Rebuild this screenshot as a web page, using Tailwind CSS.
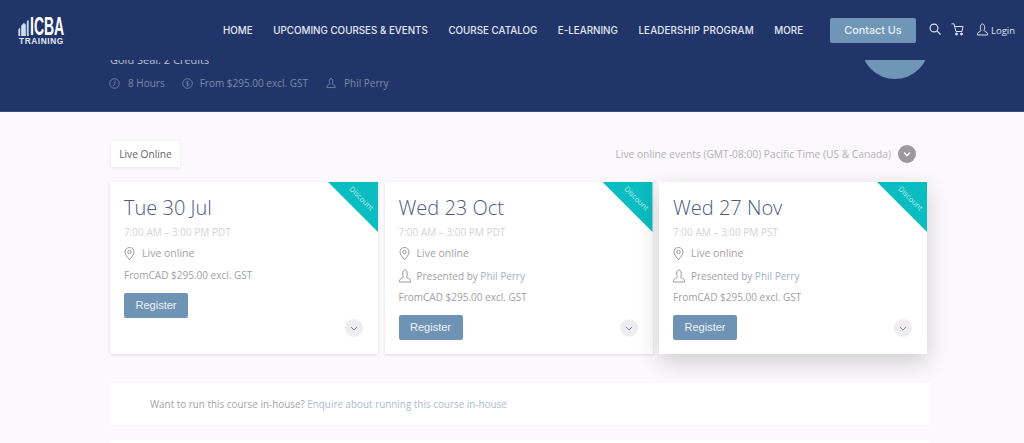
<!DOCTYPE html>
<html lang="en">
<head>
  <meta charset="UTF-8">
  <title>ICBA Training</title>
  <script src="https://cdn.jsdelivr.net/npm/@tailwindcss/browser@4"></script>
</head>
<body class="bg-[#fbf9fc] font-['Open_Sans',sans-serif] h-[443px] overflow-hidden">

  <section class="relative h-[112px] bg-[#21356a] border-b border-[#3a4c7d] overflow-hidden">
    <div class="pl-[109px] pt-[50px]">
      <p class="pl-[1px] text-[11px] leading-[20px] text-[#b9c0d2]">Gold Seal: 2 Credits</p>
      <div class="flex items-center mt-[5px] text-[10px] leading-[16px] text-[#7f8aa8]">
        <svg class="w-[11px] h-[11px] mr-[8px]" viewBox="0 0 12 12" fill="none" stroke="currentColor" stroke-width=".9"><circle cx="6" cy="6" r="5.2"/><path d="M6.500 2.800V6.200L4.600 8.600"/></svg>
        <span class="mr-[17px]">8 Hours</span>
        <svg class="w-[11px] h-[11px] mr-[7px]" viewBox="0 0 12 12" fill="none" stroke="currentColor" stroke-width=".9"><circle cx="6" cy="6" r="5.2"/><path d="M7.600 4.500C7 3.500 4.500 3.600 4.500 4.900 4.500 6.300 7.600 5.700 7.600 7.200 7.600 8.500 5 8.500 4.400 7.400M6 2.900v6.200" stroke-width=".7"/></svg>
        <span class="mr-[18px]">From $295.00 excl. GST</span>
        <svg class="w-[10px] h-[12px] mr-[8px]" viewBox="0 0 12 13" fill="none" stroke="currentColor"><path d="M4.500 7.500C3.500 6 3.500 1 6 1s2.500 5 1.500 6.500c0 1 3.500 1.500 3.500 3V12H1v-1.500c0-1.500 3.500-2 3.500-3Z"/></svg>
        <span>Phil Perry</span>
      </div>
    </div>
    <div class="absolute left-[861px] top-[11px] w-[68px] h-[68px] rounded-full bg-[#6f96b7]"></div>

    <header class="absolute inset-x-0 top-0 h-[60px] bg-[#21356a] flex items-start">
      <div class="ml-[18px] mt-[16px] w-[47px] flex flex-col text-white">
        <div class="flex items-end h-[20px]">
          <svg class="w-[11px] h-[16px] mr-[1px]" viewBox="0 0 11 17"><path d="M0 17V10L2 8V17ZM3 17V6L6 3L8 5V17ZM9 17V1L11 0V17Z" fill="#c9dcec"/></svg>
          <span class="font-['Liberation_Sans',sans-serif] font-bold text-[25px] leading-[20px] scale-x-[.56] origin-left w-[35px] whitespace-nowrap">ICBA</span>
        </div>
        <span class="ml-[1px] font-['Liberation_Sans',sans-serif] font-bold text-[8.300px] leading-[8px] mt-[1px] tracking-[.6px] text-[#e4ebf3]">TRAINING</span>
      </div>
      <nav class="absolute left-[223px] top-[24px] flex gap-[20.600px] font-['Inter',sans-serif] font-medium text-[9.800px] leading-[14px] text-[#e6e9f1] whitespace-nowrap">
        <a>HOME</a>
        <a>UPCOMING COURSES &amp; EVENTS</a>
        <a>COURSE CATALOG</a>
        <a>E-LEARNING</a>
        <a class="tracking-[.15px]">LEADERSHIP PROGRAM</a>
        <a>MORE</a>
      </nav>
      <a class="absolute left-[830px] top-[18px] w-[86px] h-[25px] pt-[1px] rounded-[2px] bg-[#6f96b7] flex items-center justify-center font-['Inter',sans-serif] font-medium text-[10.800px] text-[#eaf0f5]">Contact Us</a>
      <svg class="absolute left-[929px] top-[23px] w-[12px] h-[12px] text-[#dfe4ee]" viewBox="0 0 12 12" fill="none" stroke="currentColor" stroke-width="1.100"><circle cx="5" cy="5" r="3.900"/><path d="M8 8l3.500 3.500"/></svg>
      <svg class="absolute left-[951px] top-[23px] w-[13px] h-[13px] text-[#dfe4ee]" viewBox="0 0 13 13" fill="none" stroke="currentColor"><path d="M.5 .8H3L5 8.500H11L12 3.500H3.800"/><circle cx="5.500" cy="11" r="1" fill="currentColor"/><circle cx="10.500" cy="11" r="1" fill="currentColor"/></svg>
      <svg class="absolute left-[977px] top-[23px] w-[11px] h-[13px] text-[#dfe4ee]" viewBox="0 0 11 13" fill="none" stroke="currentColor"><path d="M4 7.500C3 6 3 1 5.500 1S8 6 7 7.500c0 1 3.500 1.500 3.500 3V12H.5v-1.500c0-1.500 3.500-2 3.500-3Z"/></svg>
      <a class="absolute left-[991px] top-[24px] text-[9.500px] leading-[14px] text-[#dfe4ee]">Login</a>
    </header>
  </section>

  <main class="w-[817px] ml-[110px]">
    <div class="flex items-center justify-between h-[26px] mt-[29px]">
      <div class="h-[26px] w-[69px] ml-[1px] pt-[1px] bg-white shadow-[0_1px_3px_rgba(0,0,0,.08)] flex items-center justify-center text-[10.200px] text-[#666]">Live Online</div>
      <div class="flex items-center mr-[11px] text-[10.250px] text-[#b4b3b4]">
        <span class="pt-[1px]">Live online events (GMT-08:00) Pacific Time (US &amp; Canada)</span>
        <span class="ml-[7px] w-[18px] h-[18px] rounded-full bg-[#9b999c] flex items-center justify-center">
          <svg class="w-[8px] h-[6px]" viewBox="0 0 8 6" fill="none" stroke="#fff" stroke-width="1.500"><path d="M1 1.500l3 3 3-3"/></svg>
        </span>
      </div>
    </div>

    <div class="grid grid-cols-3 gap-[6.500px] mt-[15px]">
      <article class="relative h-[172px] bg-white shadow-[0_1px_3px_rgba(0,0,0,.12)] overflow-hidden px-[14px] pt-[13px]">
        <div class="absolute right-0 top-0 w-[50px] h-[50px] bg-[#0bbcc0] [clip-path:polygon(0_0,100%_0,100%_100%)]"></div>
        <span class="absolute right-[1px] top-[11px] rotate-45 text-[7.500px] text-[#bdeef0]">Discount</span>
        <h2 class="font-light text-[20px] leading-[26px] text-[#4b5a82]">Tue 30 Jul</h2>
        <p class="mt-[3px] text-[10px] leading-[16px] text-[#d4d3d5]">7:00 AM – 3:00 PM PDT</p>
        <div class="flex items-center mt-[6px] h-[16px] text-[10.500px] text-[#a3a2a4]">
          <svg class="w-[11px] h-[14px] mr-[7px]" viewBox="0 0 11 14" fill="none" stroke="#8f8e90" stroke-width=".9"><path d="M5.500 13C4 10.500 1 8 1 5a4.500 4.500 0 0 1 9 0c0 3-3 5.500-4.500 8Z"/><circle cx="5.500" cy="5" r="1.700"/></svg>
          Live online
        </div>
        <p class="mt-[5px] text-[10px] leading-[16px] text-[#a2a1a3]">FromCAD $295.00 excl. GST</p>
        <a class="block mt-[10px] w-[64px] h-[25px] rounded-[2px] bg-[#6f93b5] font-['Liberation_Sans',sans-serif] text-[11px] leading-[25px] text-center text-[#eef3f7]">Register</a>
        <span class="absolute right-[15px] bottom-[17px] w-[18px] h-[18px] rounded-full bg-[#efedf0] flex items-center justify-center">
          <svg class="w-[8px] h-[5px]" viewBox="0 0 8 5" fill="none" stroke="#7c94b5"><path d="M.8 .8L4 4 7.200 .8"/></svg>
        </span>
      </article>

      <article class="relative h-[172px] bg-white shadow-[0_1px_3px_rgba(0,0,0,.12)] overflow-hidden px-[14px] pt-[13px]">
        <div class="absolute right-0 top-0 w-[50px] h-[50px] bg-[#0bbcc0] [clip-path:polygon(0_0,100%_0,100%_100%)]"></div>
        <span class="absolute right-[1px] top-[11px] rotate-45 text-[7.500px] text-[#bdeef0]">Discount</span>
        <h2 class="font-light text-[20px] leading-[26px] text-[#4b5a82]">Wed 23 Oct</h2>
        <p class="mt-[3px] text-[10px] leading-[16px] text-[#d4d3d5]">7:00 AM – 3:00 PM PDT</p>
        <div class="flex items-center mt-[6px] h-[16px] text-[10.500px] text-[#a3a2a4]">
          <svg class="w-[11px] h-[14px] mr-[7px]" viewBox="0 0 11 14" fill="none" stroke="#8f8e90" stroke-width=".9"><path d="M5.500 13C4 10.500 1 8 1 5a4.500 4.500 0 0 1 9 0c0 3-3 5.500-4.500 8Z"/><circle cx="5.500" cy="5" r="1.700"/></svg>
          Live online
        </div>
        <div class="flex items-center mt-[6px] h-[16px] text-[10px] text-[#a3a2a4]">
          <svg class="w-[12px] h-[14px] mr-[6px]" viewBox="0 0 12 14" fill="none" stroke="#8f8e90" stroke-width=".9"><path d="M4.500 8C3.300 6.500 3.300 1 6 1s2.700 5.500 1.500 7c0 1.200 4 1.500 4 3.500V13H.5v-1.500c0-2 4-2.300 4-3.500Z"/></svg>
          <span>Presented by <a class="text-[#9fb2d0]">Phil Perry</a></span>
        </div>
        <p class="mt-[5px] text-[10px] leading-[16px] text-[#a2a1a3]">FromCAD $295.00 excl. GST</p>
        <a class="block mt-[10px] w-[64px] h-[25px] rounded-[2px] bg-[#6f93b5] font-['Liberation_Sans',sans-serif] text-[11px] leading-[25px] text-center text-[#eef3f7]">Register</a>
        <span class="absolute right-[15px] bottom-[17px] w-[18px] h-[18px] rounded-full bg-[#efedf0] flex items-center justify-center">
          <svg class="w-[8px] h-[5px]" viewBox="0 0 8 5" fill="none" stroke="#7c94b5"><path d="M.8 .8L4 4 7.200 .8"/></svg>
        </span>
      </article>

      <article class="relative h-[172px] bg-white shadow-[0_8px_22px_rgba(0,0,0,.18)] overflow-hidden px-[14px] pt-[13px]">
        <div class="absolute right-0 top-0 w-[50px] h-[50px] bg-[#0bbcc0] [clip-path:polygon(0_0,100%_0,100%_100%)]"></div>
        <span class="absolute right-[1px] top-[11px] rotate-45 text-[7.500px] text-[#bdeef0]">Discount</span>
        <h2 class="font-light text-[20px] leading-[26px] text-[#4b5a82]">Wed 27 Nov</h2>
        <p class="mt-[3px] text-[10px] leading-[16px] text-[#d4d3d5]">7:00 AM – 3:00 PM PST</p>
        <div class="flex items-center mt-[6px] h-[16px] text-[10.500px] text-[#a3a2a4]">
          <svg class="w-[11px] h-[14px] mr-[7px]" viewBox="0 0 11 14" fill="none" stroke="#8f8e90" stroke-width=".9"><path d="M5.500 13C4 10.500 1 8 1 5a4.500 4.500 0 0 1 9 0c0 3-3 5.500-4.500 8Z"/><circle cx="5.500" cy="5" r="1.700"/></svg>
          Live online
        </div>
        <div class="flex items-center mt-[6px] h-[16px] text-[10px] text-[#a3a2a4]">
          <svg class="w-[12px] h-[14px] mr-[6px]" viewBox="0 0 12 14" fill="none" stroke="#8f8e90" stroke-width=".9"><path d="M4.500 8C3.300 6.500 3.300 1 6 1s2.700 5.500 1.500 7c0 1.200 4 1.500 4 3.500V13H.5v-1.500c0-2 4-2.300 4-3.500Z"/></svg>
          <span>Presented by <a class="text-[#9fb2d0]">Phil Perry</a></span>
        </div>
        <p class="mt-[5px] text-[10px] leading-[16px] text-[#a2a1a3]">FromCAD $295.00 excl. GST</p>
        <a class="block mt-[10px] w-[64px] h-[25px] rounded-[2px] bg-[#6f93b5] font-['Liberation_Sans',sans-serif] text-[11px] leading-[25px] text-center text-[#eef3f7]">Register</a>
        <span class="absolute right-[15px] bottom-[17px] w-[18px] h-[18px] rounded-full bg-[#efedf0] flex items-center justify-center">
          <svg class="w-[8px] h-[5px]" viewBox="0 0 8 5" fill="none" stroke="#7c94b5"><path d="M.8 .8L4 4 7.200 .8"/></svg>
        </span>
      </article>
    </div>

    <div class="mt-[29px] w-[820px] h-[42px] pt-[1px] bg-white pl-[40px] flex items-center text-[9.900px] text-[#a5a4a7]">
      <p>Want to run this course in-house? <a class="text-[#aebbd3]">Enquire about running this course in-house</a></p>
    </div>
    <div class="mt-[15px] w-[820px] h-[20px] bg-white"></div>
  </main>
</body>
</html>
